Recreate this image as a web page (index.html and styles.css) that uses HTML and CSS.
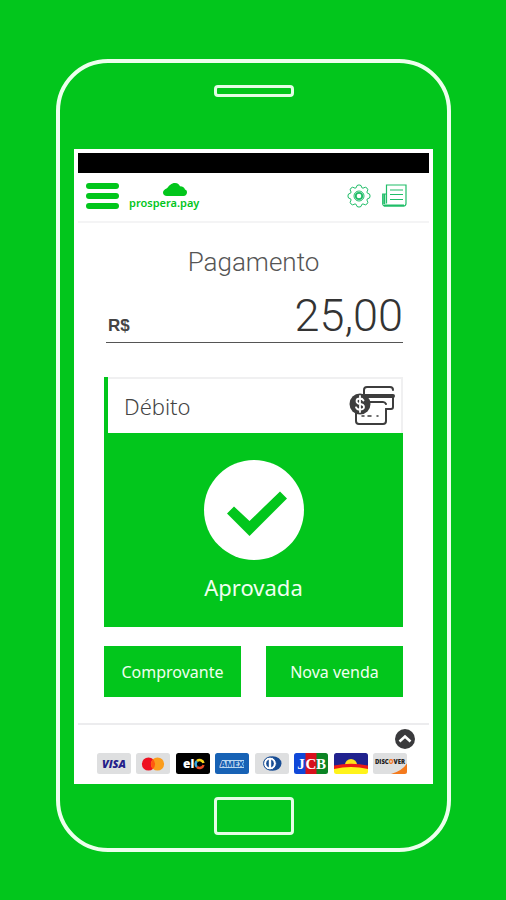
FILE: index.html
```html
<!DOCTYPE html>
<html lang="pt-BR">
<head>
<meta charset="utf-8">
<meta name="viewport" content="width=device-width, initial-scale=1">
<title>prospera.pay</title>
<link rel="stylesheet" href="styles.css">
</head>
<body>
<div class="phone">
  <div class="speaker"></div>
  <div class="screen">
    <div class="status"></div>
    <header class="header">
      <button class="icon-button" type="button" aria-label="Menu">
        <svg width="33" height="26" viewBox="0 0 33 26" fill="currentColor"><rect width="33" height="6" rx="3"/><rect y="10" width="33" height="6" rx="3"/><rect y="20" width="33" height="6" rx="3"/></svg>
      </button>
      <a class="brand" href="#">
        <svg class="cloud" width="24" height="13" viewBox="0 0 24 13" fill="currentColor"><path d="M4 13C1.500 13 0 11.500 0 9.500 0 7.500 1.500 6.500 3.500 5.500 5 4.500 5.500 3 7 2 9 .5 10 0 12 0c3 0 4 1.500 5 3.200 3 .3 4.500 1.300 5 3.300 1.500.5 2 1.500 2 2.800C24 11.500 22.500 13 20.500 13z"/></svg>
        <span class="brand-name">prospera.pay</span>
      </a>
      <button class="icon-button settings" type="button" aria-label="Configurações">
        <svg width="24" height="24" viewBox="0 0 24 24" fill="none" stroke="currentColor" stroke-linejoin="round"><path d="M10 1.500q2-1.200 4 0l.8 2.200 1.200.5 2.300-1q2.200.6 2.600 2.600l-1 2.200.5 1.200 2.100.8q1.200 2 0 4l-2.100.8-.5 1.200 1 2.300q-.6 2.200-2.600 2.600l-2.300-1-1.200.5-.8 2.100q-2 1.200-4 0l-.8-2.100-1.200-.5-2.300 1q-2.200-.6-2.600-2.600l1-2.300-.5-1.200-2.100-.8q-1.200-2 0-4l2.100-.8.5-1.200-1-2.200q.6-2.200 2.600-2.600l2.300 1 1.200-.5z"/><circle cx="12" cy="12" r="5"/><circle cx="12" cy="12" r="3.200" stroke-width="1.800"/></svg>
      </button>
      <button class="icon-button" type="button" aria-label="Extrato">
        <svg width="25" height="23" viewBox="0 0 25 23" fill="none" stroke="currentColor" stroke-width="1.200"><path d="M4.500 19.500V1H24v18.500a2.500 2.500 0 0 1-2.500 2.500H3a2.300 2.300 0 0 1-2.300-2.300V10h3.800"/><path d="M8 6h13M8 10.500h13M8 15.500h13"/><path d="M2.300 10v10M2 21.500h20" stroke-width="2"/></svg>
      </button>
    </header>
    <main class="content">
      <h1 class="title">Pagamento</h1>
      <div class="amount">
        <label class="currency" for="amount">R$</label>
        <input class="value" id="amount" type="text" inputmode="decimal" value="25,00">
      </div>
      <section class="result">
        <div class="method">
          <h2 class="method-name">Débito</h2>
          <svg width="46" height="42" viewBox="0 0 46 42" fill="none" stroke="#3d3d3d" stroke-width="2" stroke-linecap="round">
            <path d="M15 9V5q0-3 3-3h23q3 0 3 3"/>
            <path d="M16 11h28" stroke-width="4"/>
            <path d="M44 11v11q0 2-2 2h-5"/>
            <path d="M20 17h14q2 0 3 2M37 24v12q0 3-3 3H10q-3 0-3-3v-8"/>
            <path d="M13 31h2M19 31h3M28 31h1" stroke-width="1.500"/>
            <circle cx="11" cy="19" r="10.500" fill="#3d3d3d" stroke="none"/>
            <path d="M14.500 15.500q-1-2-3.500-2-3.500 0-3.500 2.500T11 19q4 .6 4 3t-4 2.600q-3 0-4-2.300M11 11v16" stroke="#fff" stroke-width="1.800"/>
          </svg>
        </div>
        <div class="approved">
          <svg width="100" height="100" viewBox="0 0 100 100"><circle cx="50" cy="50" r="50" fill="#fff"/><path d="M23 53.500 30 46.500 45.500 61 76 31.500 83 38.500 45.500 76z" fill="#02c61c"/></svg>
          <p class="approved-text">Aprovada</p>
        </div>
      </section>
      <div class="actions">
        <button class="action" type="button">Comprovante</button>
        <button class="action" type="button">Nova venda</button>
      </div>
    </main>
    <footer class="footer">
      <button class="icon-button expand" type="button" aria-label="Expandir">
        <svg width="20" height="20" viewBox="0 0 20 20"><circle cx="10" cy="10" r="10" fill="#3a3a3c"/><path d="M4.500 12.500 10 7.500l5.500 5" fill="none" stroke="#fff" stroke-width="2.600"/></svg>
      </button>
      <div class="brands">
        <svg class="card" viewBox="0 0 34 21" role="img" aria-label="Visa"><rect width="34" height="21" rx="2.500" fill="#dedfe0"/><text class="visa" x="17" y="15" text-anchor="middle">VISA</text></svg>
        <svg class="card" viewBox="0 0 34 21" role="img" aria-label="Mastercard"><rect width="34" height="21" rx="2.500" fill="#dedfe0"/><circle cx="12.500" cy="11" r="6.600" fill="#ee1020"/><circle cx="21.500" cy="11" r="6.600" fill="#fb9d1c"/><path d="M17 6.200a6.600 6.600 0 0 1 0 9.600 6.600 6.600 0 0 1 0-9.600z" fill="#ff5a10"/></svg>
        <svg class="card" viewBox="0 0 34 21" role="img" aria-label="Elo"><rect width="34" height="21" rx="2.500"/><text class="elo" x="7" y="15">el</text><g fill="none" stroke-width="2.500"><path d="M21 14a4 4 0 0 1 0-6" stroke="#35a6dc"/><path d="M21 8a4 4 0 0 1 6.500 2" stroke="#f5d51b"/><path d="M27.500 12a4 4 0 0 1-6.500 2" stroke="#ee4a25"/></g></svg>
        <svg class="card" viewBox="0 0 34 21" role="img" aria-label="American Express"><rect width="34" height="21" rx="2.500" fill="#1762b5"/><path d="M7 7h22v2l-1 2 1 2v2H4.500v-2z" fill="#b9d6f0"/><text class="amex" x="17" y="14" text-anchor="middle">AMEX</text></svg>
        <svg class="card" viewBox="0 0 34 21" role="img" aria-label="Diners Club"><rect width="34" height="21" rx="2.500" fill="#dedfe0"/><ellipse cx="17.500" cy="10.500" rx="9" ry="7.300" fill="#174c94"/><circle cx="15" cy="10.500" r="6.400" fill="#fff" stroke="#174c94"/><path d="M13.800 6.500a4.300 4.300 0 0 0 0 8zM16.200 6.500a4.300 4.300 0 0 1 0 8z" fill="#174c94"/></svg>
        <svg class="card" viewBox="0 0 34 21" role="img" aria-label="JCB"><rect width="18" height="21" rx="2.500" fill="#1048d8"/><rect x="16" width="18" height="21" rx="2.500" fill="#0b8324"/><path d="M11.500 0h11v21h-11z" fill="#d7101c"/><g class="jcb" text-anchor="middle"><text x="7" y="16">J</text><text x="17" y="16">C</text><text x="27" y="16">B</text></g></svg>
        <svg class="card" viewBox="0 0 34 21" role="img" aria-label="Hipercard"><path d="M0 14V2.500Q0 0 2.500 0h29Q34 0 34 2.500V14z" fill="#20228e"/><path d="M11 12a6 6 0 0 1 12 0z" fill="#ffe21a"/><path d="M0 14q17-4 34 0v4.500Q34 21 31.500 21h-29Q0 21 0 18.500z" fill="#fff31a"/><path d="M0 12.500q17-3.500 34 0v3.500q-17-4-34 0z" fill="#ee1a17"/></svg>
        <svg class="card" viewBox="0 0 34 21" role="img" aria-label="Discover"><rect width="34" height="21" rx="2.500" fill="#dedfe0"/><path d="M34 10.500v8q0 2.500-2.500 2.500H18Q29 18 34 10.500z" fill="#f47a1d"/><text class="discover" x="17" y="11" text-anchor="middle">DISC<tspan fill="#f47a1d">O</tspan>VER</text></svg>
      </div>
    </footer>
  </div>
  <div class="home"></div>
</div>
</body>
</html>
```
FILE: styles.css
```css
* { box-sizing: border-box; }

body {
  margin: 0;
  padding: 59px 55px 48px 56px;
  background: #02c61c;
  color: #444;
  font-family: "Noto Sans", "Open Sans", sans-serif;
}

svg { display: block; }

h1, h2, p { margin: 0; font-weight: 300; }

.phone {
  display: flex;
  flex-direction: column;
  align-items: center;
  padding: 22px 14px 13px;
  border: 4px solid #edffed;
  border-radius: 52px;
}

.speaker, .home {
  width: 80px;
  border: 3px solid #e4fde6;
  border-radius: 4px;
}

.speaker { height: 12px; }
.home { height: 38px; }

.screen {
  width: 100%;
  margin: 52px 0 13px;
  padding: 4px;
  background: #fff;
}

.status { height: 20px; background: #000; }

.header {
  display: flex;
  align-items: center;
  height: 50px;
  padding: 0 22px 3px 8px;
  border-bottom: 2px solid #f4f4f5;
  color: #02c61c;
}

.icon-button {
  padding: 0;
  border: 0;
  background: none;
  color: inherit;
}

.settings { margin: 0 11px 0 auto; }

.header .icon-button + .icon-button,
.settings { color: #20bd68; }

.brand {
  display: flex;
  flex-direction: column;
  margin-left: 10px;
  color: inherit;
  text-decoration: none;
}

.cloud { margin-left: 34px; }

.brand-name {
  font-size: 11px;
  font-weight: 600;
  line-height: 13px;
}

.content { padding: 21px 26px 26px; }

.title {
  color: #555;
  font-family: Roboto, "Liberation Sans", sans-serif;
  font-size: 26px;
  line-height: 36px;
  text-align: center;
}

.amount {
  display: flex;
  align-items: baseline;
  margin: 9px 0 34px 2px;
  border-bottom: 1px solid #555;
}

.currency {
  padding-left: 2px;
  font-family: "Liberation Sans", sans-serif;
  font-size: 17px;
  font-weight: 700;
}

.value {
  flex: 1;
  min-width: 0;
  height: 53px;
  padding: 0;
  border: 0;
  background: none;
  color: #333;
  font-family: Roboto, "Liberation Sans", sans-serif;
  font-size: 45px;
  font-weight: 300;
  text-align: right;
}

.result { border-left: 4px solid #02c61c; }

.method {
  display: flex;
  align-items: center;
  justify-content: space-between;
  height: 56px;
  padding: 0 6px 0 16px;
  border: 2px solid #f0f0f1;
  border-width: 2px 2px 0 0;
}

.method-name { font-size: 22px; }

.approved {
  display: flex;
  flex-direction: column;
  align-items: center;
  padding: 27px 4px 23px 0;
  background: #02c61c;
  color: #f0fff0;
}

.approved-text {
  margin-top: 10px;
  font-size: 22px;
  font-weight: 400;
  line-height: 34px;
}

.actions {
  display: grid;
  grid-template-columns: 1fr 1fr;
  gap: 25px;
  margin-top: 19px;
}

.action {
  height: 51px;
  padding: 0;
  border: 0;
  background: #02c61c;
  color: #f0fff0;
  font-family: inherit;
  font-size: 16px;
}

.footer {
  padding: 4px 14px 6px 19px;
  border-top: 2px solid #ececee;
}

.expand { display: block; margin-left: auto; }

.brands {
  display: flex;
  justify-content: space-between;
  margin: 4px 8px 0 0;
}

.card { width: 34px; height: 21px; }

.card text {
  font-family: "Open Sans", sans-serif;
  font-weight: 800;
}

.card .visa { fill: #23208a; font-size: 11px; font-style: italic; }
.card .elo { fill: #fff; font-size: 12px; }
.card .amex { fill: #1762b5; font-size: 8px; }
.card .jcb text { fill: #fff; font-family: "Liberation Serif", serif; font-size: 15px; }
.card .discover { fill: #222; font-size: 6px; }
```
